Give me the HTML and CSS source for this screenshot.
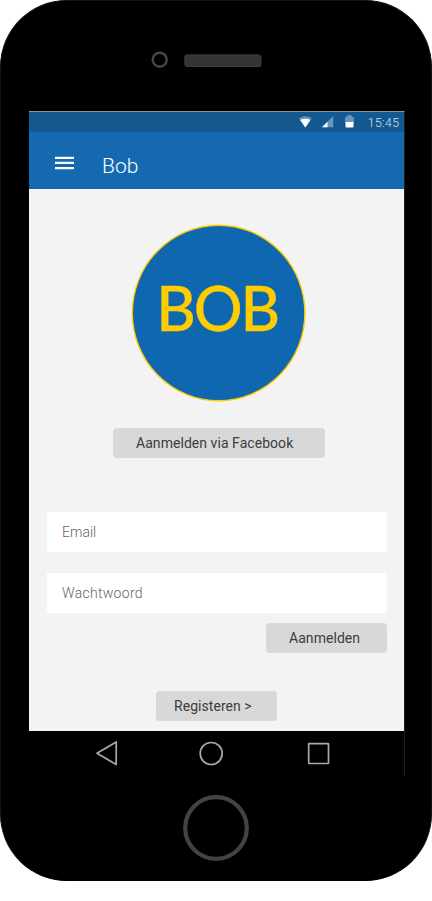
FILE: index.html
```html
<!DOCTYPE html>
<html lang="nl">
<head>
<meta charset="utf-8">
<title>Bob</title>
<link rel="stylesheet" href="styles.css">
</head>
<body>
<div class="phone">
  <div class="phone-top">
    <svg class="camera" width="18" height="18" viewBox="0 0 18 18"><circle cx="8.7" cy="8.7" r="7" fill="none" stroke="#444" stroke-width="2.5"/></svg>
    <svg class="speaker" width="78" height="14" viewBox="0 0 78 14"><rect x=".9" y=".9" width="76" height="11.6" rx="2" fill="#343434" stroke="#404040"/></svg>
  </div>
  <main class="screen">
    <div class="status-bar">
      <svg class="wifi" width="13" height="12" viewBox="0 0 13 12"><path d="M0 2.2Q6.3-1.8 12.6 2.2L6.3 11.5Z" fill="#6497c1"/><path d="M1.2 3.9Q6.3 1.4 11.4 3.9L6.3 11.5Z" fill="#fff"/></svg>
      <svg class="signal" width="12" height="12" viewBox="0 0 12 12"><path d="M0 11.3L11.2 0V11.3Z" fill="#6497c1"/><path d="M0 11.3L5.5 5.8V11.3Z" fill="#fff"/></svg>
      <svg class="battery" width="9" height="13" viewBox="0 0 9 13"><path d="M0 2.2Q0 .5 2 .5L2.5-.7H6.5L7 .5Q9 .5 9 2.2V7H0Z" fill="#6497c1"/><path d="M.5 6H8.5V10.5Q8.5 11.5 7.5 11.5H1.5Q.5 11.5 .5 10.5Z" fill="#fff"/></svg>
      <span class="time">15:45</span>
    </div>
    <header class="app-bar">
      <svg class="menu" width="19" height="14" viewBox="0 0 19 14"><path d="M0 1.8H19M0 6.9H19M0 12.2H19" stroke="#fff" stroke-width="2.3"/></svg>
      <h1>Bob</h1>
    </header>
    <section class="content">
      <svg class="logo" width="176" height="178" viewBox="0 0 176 178"><ellipse cx="87.6" cy="89" rx="86.3" ry="87.8" fill="#0f67b0" stroke="#fc0" stroke-width="1.4"/><text class="logo-text" x="25.2" y="106.5" textLength="124">BOB</text></svg>
      <button class="button facebook">Aanmelden via Facebook</button>
      <input class="field" type="email" placeholder="Email" aria-label="Email">
      <input class="field password" type="password" placeholder="Wachtwoord" aria-label="Wachtwoord">
      <button class="button login">Aanmelden</button>
      <button class="button register">Registeren &gt;</button>
    </section>
    <nav class="nav-bar">
      <svg width="24" height="26" viewBox="0 0 24 26"><path d="M2 13.2L21.2 2V24.6Z" fill="none" stroke="#a9a9a9" stroke-width="1.7" stroke-linejoin="round"/></svg>
      <svg width="26" height="26" viewBox="0 0 26 26"><circle cx="11.2" cy="13.5" r="11" fill="none" stroke="#a9a9a9" stroke-width="1.7"/></svg>
      <svg width="24" height="26" viewBox="0 0 24 26"><rect x="1.7" y="3.6" width="19.8" height="19.9" rx=".5" fill="none" stroke="#a9a9a9" stroke-width="1.7"/></svg>
    </nav>
  </main>
  <svg class="home" width="68" height="68" viewBox="0 0 68 68"><circle cx="34" cy="34" r="30.8" fill="none" stroke="#434343" stroke-width="4.2"/></svg>
</div>
</body>
</html>
```
FILE: styles.css
```css
* { box-sizing: border-box; }
body { margin: 0; background: #fff; font-family: Roboto, "Liberation Sans", sans-serif; }
svg { display: block; flex: none; overflow: visible; }
.phone { width: 432px; height: 881px; background: #000; border: 1px solid #141414; border-bottom-color: #000; border-radius: 67px; }
.phone-top { height: 110px; display: flex; align-items: flex-start; padding: 50px 0 0 150px; }
.speaker { margin: 3px 0 0 15px; }
.screen { width: 376px; height: 665px; margin-left: 28px; border-top: 1px solid #8596a5; border-right: 1px solid #222; display: flex; flex-direction: column; }
.status-bar { height: 20px; background: #145890; display: flex; align-items: flex-start; padding: 4px 5px 0 270px; }
.signal { margin-left: 10px; }
.battery { margin-left: 11px; }
.time { margin: 0 -.4px 0 auto; font-size: 12.2px; line-height: 15px; font-weight: 300; color: #dce8f2; letter-spacing: .4px; }
.app-bar { height: 57px; background: #1569b0; display: flex; align-items: flex-start; padding: 24px 0 0 26px; }
h1 { margin: -2px 0 0 28px; color: #fff; font-weight: 300; font-size: 21px; line-height: 25px; }
.content { height: 542px; background: #f3f3f3; display: flex; flex-direction: column; padding: 35px 17px 0 18px; }
.logo { margin-left: 84px; }
.logo-text { font-family: Lato, sans-serif; font-size: 61px; font-weight: 500; fill: #fc0; stroke: #fc0; stroke-width: .3px; }
.button { height: 30px; border: 0; border-radius: 4px; background: #d8d8d8; color: #3c3c3c; font: 400 14px/30px Roboto, sans-serif; letter-spacing: .05px; text-align: left; padding: 0 0 0 23px; flex: none; white-space: nowrap; }
.facebook { width: 212px; margin: 26px 0 54px 66px; }
.field { width: 340px; height: 40px; border: 0; border-radius: 0; background: #fff; padding: 0 15px; margin: 0 0 21px; font: 300 14px Roboto, sans-serif; color: #666; flex: none; }
.field::placeholder { color: #666; opacity: 1; }
.password { letter-spacing: .3px; }
.login { width: 121px; margin: -11px 0 38px 219px; }
.register { width: 121px; margin-left: 109px; padding-left: 18px; }
.nav-bar { height: 45px; display: flex; align-items: flex-start; padding: 9px 73px 0 66px; justify-content: space-between; }
.home { margin: 18px 0 0 181px; }
```
